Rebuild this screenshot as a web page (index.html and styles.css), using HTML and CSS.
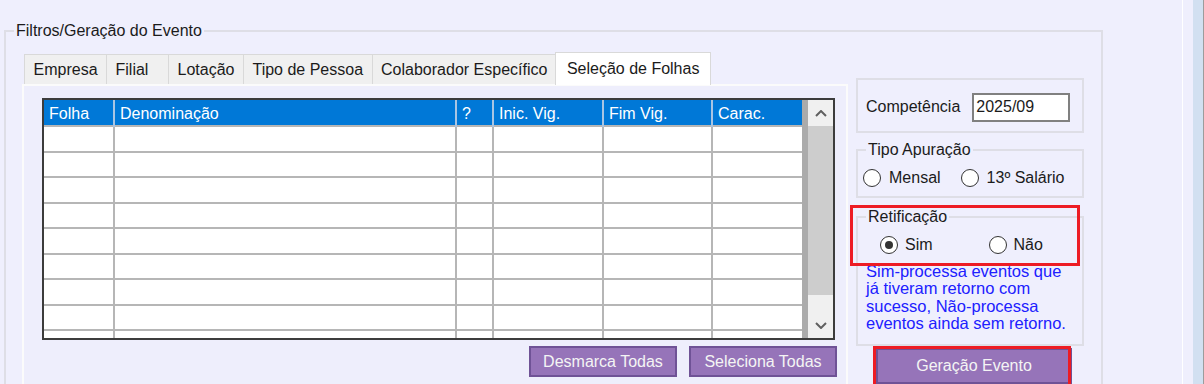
FILE: index.html
```html
<!DOCTYPE html>
<html lang="pt-BR">
<head>
  <meta charset="UTF-8" />
  <meta name="viewport" content="width=device-width, initial-scale=1" />
  <title>Geração do Evento</title>
  <link rel="stylesheet" href="styles.css">
</head>
<body>

<div class="window">
  <div class="content">
    <fieldset class="group main-group">
      <legend>Filtros/Geração do Evento</legend>
      <div class="group-body">

        <div class="tabs-area">
          <div class="tab-strip">
            <div class="tab">Empresa</div>
            <div class="tab tab-short">Filial</div>
            <div class="tab">Lotação</div>
            <div class="tab">Tipo de Pessoa</div>
            <div class="tab">Colaborador Específico</div>
            <div class="tab active">Seleção de Folhas</div>
          </div>

          <div class="tab-page">
            <div class="grid">
              <div class="grid-cols">
                <div class="row head">
                  <div>Folha</div>
                  <div>Denominação</div>
                  <div>?</div>
                  <div>Inic. Vig.</div>
                  <div>Fim Vig.</div>
                  <div>Carac.</div>
                </div>
                <div class="row"><div></div><div></div><div></div><div></div><div></div><div></div></div>
                <div class="row"><div></div><div></div><div></div><div></div><div></div><div></div></div>
                <div class="row"><div></div><div></div><div></div><div></div><div></div><div></div></div>
                <div class="row"><div></div><div></div><div></div><div></div><div></div><div></div></div>
                <div class="row"><div></div><div></div><div></div><div></div><div></div><div></div></div>
                <div class="row"><div></div><div></div><div></div><div></div><div></div><div></div></div>
                <div class="row"><div></div><div></div><div></div><div></div><div></div><div></div></div>
                <div class="row"><div></div><div></div><div></div><div></div><div></div><div></div></div>
                <div class="row"><div></div><div></div><div></div><div></div><div></div><div></div></div>
              </div>
              <div class="grid-pad"></div>
              <div class="vscroll">
                <div class="sb-btn">
                  <svg width="12" height="7" viewBox="0 0 12 7"><polyline points="1,6 6,1 11,6" /></svg>
                </div>
                <div class="sb-thumb"></div>
                <div class="sb-track"></div>
                <div class="sb-btn">
                  <svg width="12" height="7" viewBox="0 0 12 7"><polyline points="1,1 6,6 11,1" /></svg>
                </div>
              </div>
            </div>

            <div class="grid-actions">
              <button class="btn">Desmarca Todas</button>
              <button class="btn">Seleciona Todas</button>
            </div>
          </div>
        </div>

        <div class="side">
          <div class="comp-box">
            <label for="competencia">Competência</label>
            <input id="competencia" type="text" value="2025/09" />
          </div>

          <fieldset class="group tipo-group">
            <legend>Tipo Apuração</legend>
            <div class="options">
              <span class="opt opt-mensal"><span class="radio"></span>Mensal</span>
              <span class="opt"><span class="radio"></span>13º Salário</span>
            </div>
          </fieldset>

          <fieldset class="group retif-group">
            <legend>Retificação</legend>
            <div class="options">
              <span class="opt opt-sim"><span class="radio checked"></span>Sim</span>
              <span class="opt"><span class="radio"></span>Não</span>
            </div>
            <p class="hint">Sim-processa eventos que já tiveram retorno com sucesso, Não-processa eventos ainda sem retorno.</p>
          </fieldset>

          <button class="btn btn-gerar">Geração Evento</button>

          <!-- marcações em vermelho da captura -->
          <div class="mark mark-retif"></div>
          <div class="mark mark-gerar"></div>
        </div>

      </div>
    </fieldset>
  </div>
  <div class="edge"><div class="edge-bar"></div></div>
</div>

</body>
</html>
```

FILE: styles.css
```css
* {
  box-sizing: border-box;
}

body {
  margin: 0;
  background: #efeffd;
  font-family: "Liberation Sans", Arial, sans-serif;
  font-size: 16px;
  color: #1b1b1b;
}

.window {
  display: flex;
  height: 384px;
  overflow: hidden;
}

.content {
  width: 1182px;
  padding: 22px 0 0 4px;
}

.edge {
  flex: 1;
  border-left: 1px solid #fff;
  padding-left: 10px;
}

.edge-bar {
  height: 100%;
  background: #d2e0f1;
  border-right: 1px solid #9c9c9c;
}

/* group boxes */
.group {
  margin: 0;
  padding: 0;
  border: 2px solid #dedee6;
}

.group legend {
  margin-left: 8px;
  padding: 0 2px;
  line-height: 18px;
}

.main-group {
  width: 1099px;
  height: 420px;
}

.group-body {
  display: flex;
}

/* tabs */
.tabs-area {
  width: 826px;
  margin: 11px 0 0 16px;
}

.tab-strip {
  display: flex;
  align-items: flex-end;
  height: 33px;
  padding-left: 2px;
}

.tab {
  height: 30px;
  padding: 0 8.5px;
  line-height: 29px;
  background: #f0f0f0;
  border: 1px solid #d9d9d9;
  border-bottom: none;
  margin-left: -1px;
  white-space: nowrap;
}

.tab:first-child {
  margin-left: 0;
}

.tab-short {
  min-width: 63px;
}

.tab.active {
  height: 33px;
  line-height: 31px;
  background: #fff;
  margin: 0 -2px -1px -2px;
  padding: 0 11px;
  position: relative;
  z-index: 1;
}

.tab-page {
  height: 320px;
  background: #eeeefc;
  border: 2px solid #fbfbfb;
}

/* grid */
.grid {
  display: flex;
  width: 793px;
  height: 242px;
  margin: 12px 0 0 18px;
  border: 2px solid #3c3c3c;
  background: #fff;
  overflow: hidden;
}

.grid-cols {
  width: 758px;
}

.row {
  display: grid;
  grid-template-columns: 71px 342px 37px 110px 109px 89px;
  height: 25px;
  border-bottom: 2px solid #b6b6b6;
}

.row:nth-child(even) {
  height: 26px;
}

.row > div {
  border-right: 2px solid #b6b6b6;
}

.row > div:last-child {
  border-right: none;
}

.row.head {
  height: 27px;
  background: #0078d7;
  color: #fff;
  line-height: 28px;
}

.row.head > div {
  padding-left: 5px;
  border-right-color: #a9c5e3;
}

.grid-pad {
  width: 6px;
  background: #ababab;
}

.vscroll {
  width: 25px;
  display: flex;
  flex-direction: column;
  background: #f0f0f0;
}

.sb-btn {
  height: 26px;
  display: flex;
  align-items: center;
  justify-content: center;
}

.sb-btn svg polyline {
  fill: none;
  stroke: #606060;
  stroke-width: 2;
}

.sb-thumb {
  height: 169px;
  background: #cdcdcd;
}

.sb-track {
  flex: 1;
}

.grid-actions {
  display: flex;
  justify-content: flex-end;
  gap: 12px;
  margin-top: 6px;
  padding-right: 9px;
}

.btn {
  height: 31px;
  width: 148px;
  padding: 0;
  background: #9674b9;
  border: 2px solid #6f5296;
  color: #f4f4f4;
  font-family: inherit;
  font-size: 16px;
}

/* right column */
.side {
  position: relative;
  width: 228px;
  margin-left: 8px;
  padding-top: 38px;
}

.comp-box {
  display: flex;
  align-items: center;
  gap: 12px;
  height: 55px;
  padding: 3px 0 0 8px;
  border: 2px solid #dedee6;
}

.comp-box input {
  width: 98px;
  height: 29px;
  padding: 0 2px;
  border: 2px solid #808080;
  background: #fff;
  font-family: inherit;
  font-size: 16px;
  color: #1b1b1b;
}

.tipo-group {
  margin-top: 8px;
}

.retif-group {
  margin-top: 10px;
  padding-bottom: 12px;
}

.options {
  display: flex;
  align-items: center;
  height: 37px;
  padding-left: 5px;
}

.retif-group .options {
  padding-left: 22px;
}

.opt {
  display: flex;
  align-items: center;
  gap: 7px;
}

.tipo-group .opt {
  gap: 8px;
}

.opt-mensal {
  margin-right: 20px;
}

.opt-sim {
  margin-right: 56px;
}

.radio {
  width: 18px;
  height: 18px;
  border: 1px solid #333;
  border-radius: 50%;
  background: #fff;
  position: relative;
}

.radio.checked::after {
  content: "";
  position: absolute;
  left: 4px;
  top: 4px;
  width: 8px;
  height: 8px;
  border-radius: 50%;
  background: #333;
}

.hint {
  margin: 0;
  padding-left: 8px;
  width: 216px;
  font-size: 16.5px;
  line-height: 17.3px;
  color: #2020ff;
}

.btn-gerar {
  width: 196px;
  height: 36px;
  margin: 2px 0 0 20px;
}

.mark {
  position: absolute;
  border: 3px solid #ed1c24;
  z-index: 2;
}

.mark-retif {
  left: -6px;
  top: 165px;
  width: 230px;
  height: 61px;
}

.mark-gerar {
  left: 17px;
  top: 306px;
  width: 198px;
  height: 46px;
}
```
